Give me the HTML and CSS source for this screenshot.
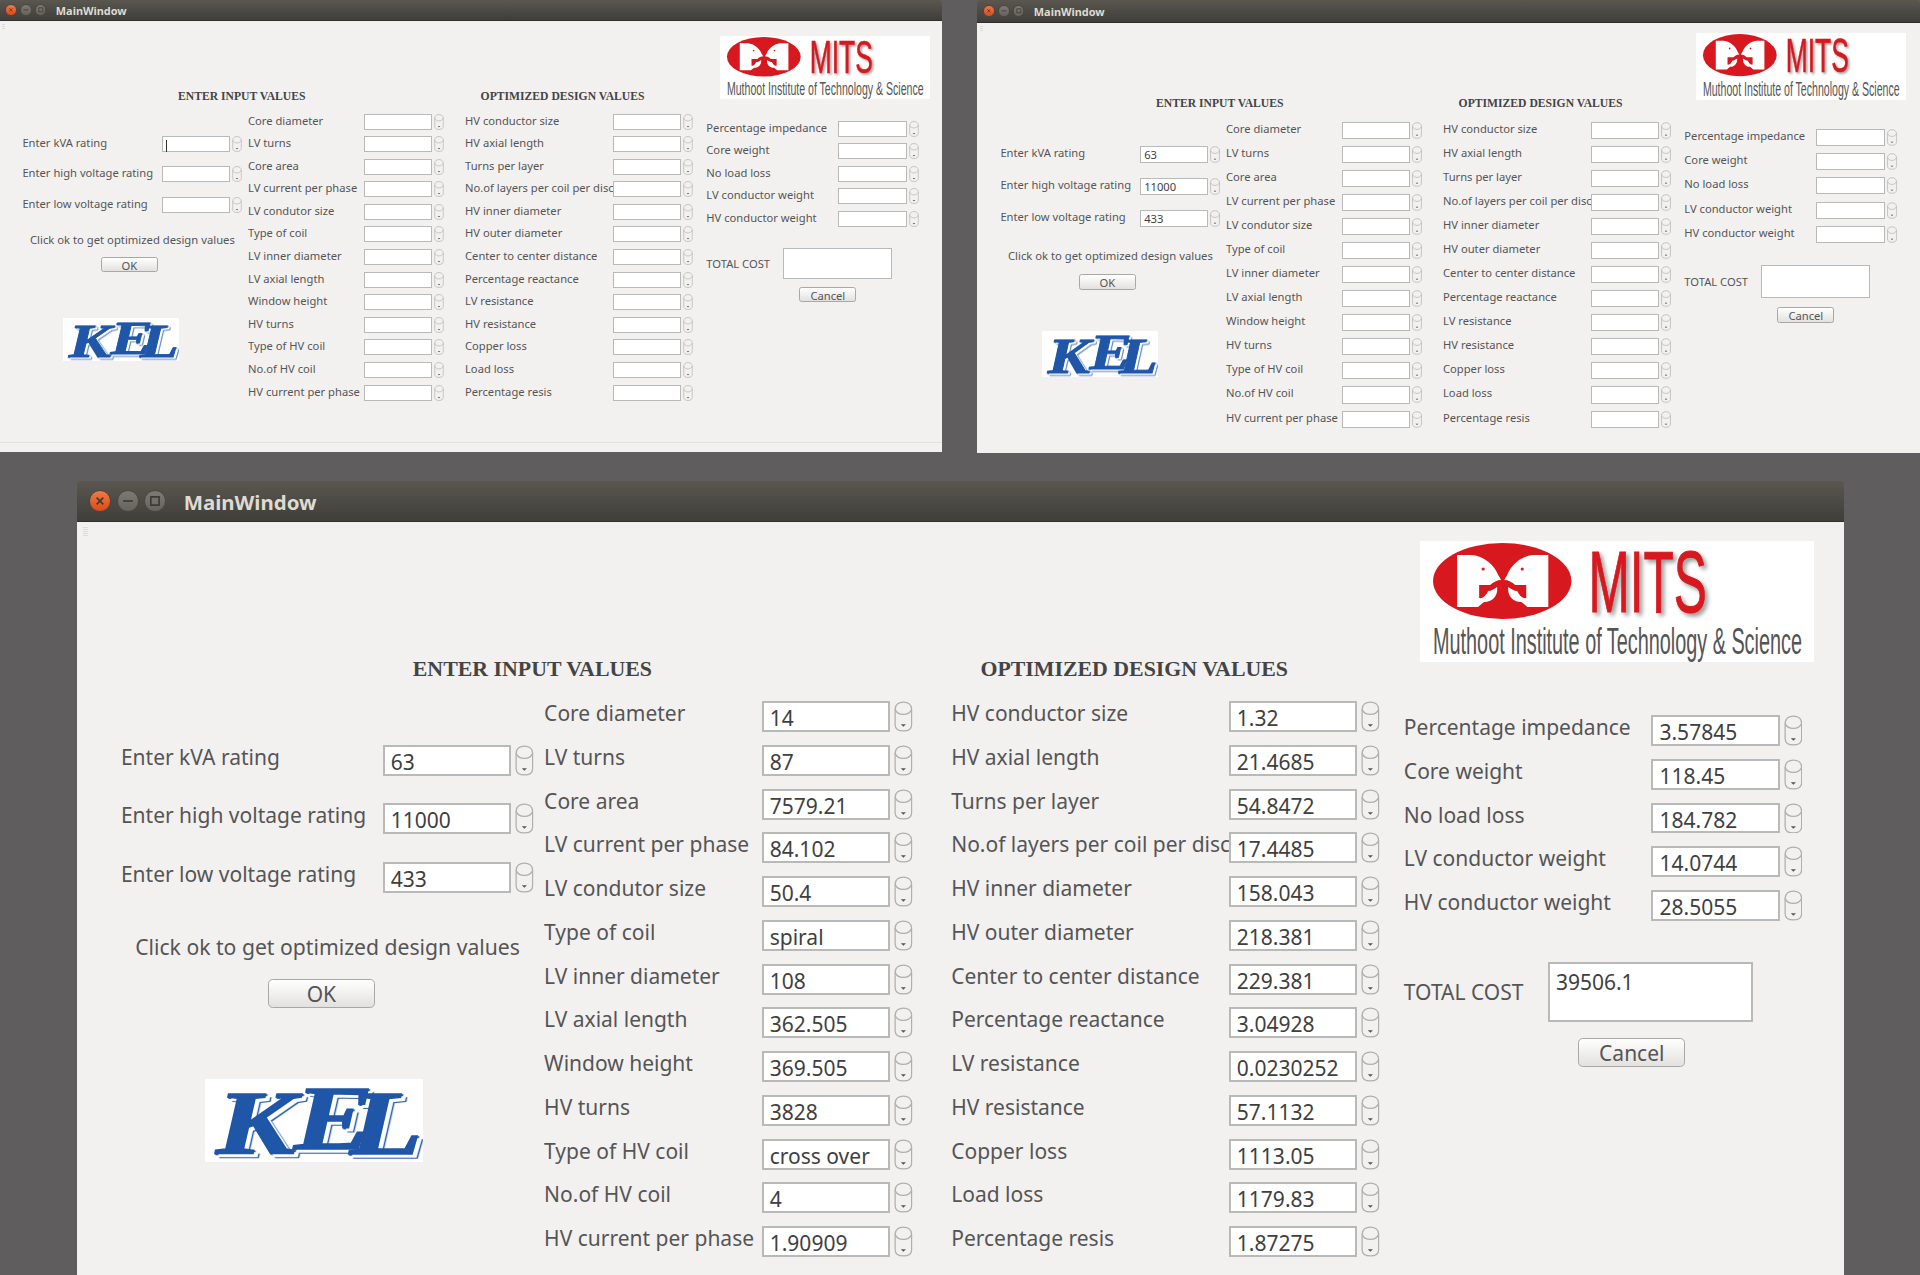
FILE: index.html
```html
<!DOCTYPE html>
<html lang="en">
<head>
    <meta charset="UTF-8">
    <title>MainWindow</title>
    <link rel="stylesheet" href="styles.css">
</head>
<body>

<svg class="defs" width="0" height="0" aria-hidden="true">
    <symbol id="spin" viewBox="0 0 18 30">
        <path class="spin-line" d="M1 8C1 3 5 1 9 1s8 2 8 7v15c0 4-3 6-8 6s-8-2-8-6z"/>
        <path class="spin-line" d="M1 8c1 3 4 5 8 5s7-2 8-5"/>
        <path class="spin-arrow" d="M6.5 22.5h5L9 25z"/>
    </symbol>
    <symbol id="w-close" viewBox="0 0 12 12"><path class="w-mark" d="M4 4l4 4M8 4l-4 4"/></symbol>
    <symbol id="w-min" viewBox="0 0 12 12"><path class="w-mark" d="M3 6h6"/></symbol>
    <symbol id="w-max" viewBox="0 0 12 12"><path class="w-mark" d="M3.5 3.5h5v5h-5z"/></symbol>
    <symbol id="emblem" viewBox="0 0 165 80">
        <ellipse cx="82" cy="40" rx="69" ry="38" fill="#d7191f"/>
        <path fill="#fff" d="M37 14H52C64 15 74 24 78 34L81 39C77 39 73 41 70 44H59V57C63 58 66 54 68 50C71 50 74 48 77 46C78 55 72 61 64 61C61 63 59 65 58 66H37Z"/>
        <path fill="#fff" transform="matrix(-1 0 0 1 165 0)" d="M37 14H52C64 15 74 24 78 34L81 39C77 39 73 41 70 44H59V57C63 58 66 54 68 50C71 50 74 48 77 46C78 55 72 61 64 61C61 63 59 65 58 66H37Z"/>
        <circle cx="63" cy="28" r="1.6" fill="#d7191f"/>
        <circle cx="102" cy="28" r="1.6" fill="#d7191f"/>
    </symbol>
</svg>

<!-- empty form, caret in the first box -->
<div class="window win-a">
    <div class="titlebar">
        <span class="wbtn wbtn-close"><svg><use href="#w-close"/></svg></span><span class="wbtn"><svg><use href="#w-min"/></svg></span><span class="wbtn"><svg><use href="#w-max"/></svg></span>
        <span class="title">MainWindow</span>
    </div>
    <div class="win-body">
        <div class="grip"></div>
        <div class="form">
            <h2 class="heading heading-input">ENTER INPUT VALUES</h2>
            <h2 class="heading heading-output">OPTIMIZED DESIGN VALUES</h2>
            <svg class="logo-mits" viewBox="0 0 393 121" preserveAspectRatio="none">
                <use href="#emblem" width="165" height="80"/>
                <text class="mits-name" x="168" y="71" textLength="118" lengthAdjust="spacingAndGlyphs">MITS</text>
                <text class="mits-sub" x="13" y="113" textLength="368" lengthAdjust="spacingAndGlyphs">Muthoot Institute of Technology &amp; Science</text>
            </svg>

            <div class="col col-a">
                <div class="field"><span class="label">Enter kVA rating</span><span class="box"><i class="caret"></i></span><svg class="spin"><use href="#spin"/></svg></div>
                <div class="field"><span class="label">Enter high voltage rating</span><span class="box"></span><svg class="spin"><use href="#spin"/></svg></div>
                <div class="field"><span class="label">Enter low voltage rating</span><span class="box"></span><svg class="spin"><use href="#spin"/></svg></div>
                <p class="hint">Click ok to get optimized design values</p>
                <button class="btn btn-ok">OK</button>
                <svg class="logo-kel" viewBox="0 0 219 85" preserveAspectRatio="none">
                    <text class="kel" transform="scale(1.3 1)" x="8.5 69 112" y="77 71 77">KEL</text>
                </svg>
            </div>

            <div class="col col-b">
                <div class="field"><span class="label">Core diameter</span><span class="box"></span><svg class="spin"><use href="#spin"/></svg></div>
                <div class="field"><span class="label">LV turns</span><span class="box"></span><svg class="spin"><use href="#spin"/></svg></div>
                <div class="field"><span class="label">Core area</span><span class="box"></span><svg class="spin"><use href="#spin"/></svg></div>
                <div class="field"><span class="label">LV current per phase</span><span class="box"></span><svg class="spin"><use href="#spin"/></svg></div>
                <div class="field"><span class="label">LV condutor size</span><span class="box"></span><svg class="spin"><use href="#spin"/></svg></div>
                <div class="field"><span class="label">Type of coil</span><span class="box"></span><svg class="spin"><use href="#spin"/></svg></div>
                <div class="field"><span class="label">LV inner diameter</span><span class="box"></span><svg class="spin"><use href="#spin"/></svg></div>
                <div class="field"><span class="label">LV axial length</span><span class="box"></span><svg class="spin"><use href="#spin"/></svg></div>
                <div class="field"><span class="label">Window height</span><span class="box"></span><svg class="spin"><use href="#spin"/></svg></div>
                <div class="field"><span class="label">HV turns</span><span class="box"></span><svg class="spin"><use href="#spin"/></svg></div>
                <div class="field"><span class="label">Type of HV coil</span><span class="box"></span><svg class="spin"><use href="#spin"/></svg></div>
                <div class="field"><span class="label">No.of HV coil</span><span class="box"></span><svg class="spin"><use href="#spin"/></svg></div>
                <div class="field"><span class="label">HV current per phase</span><span class="box"></span><svg class="spin"><use href="#spin"/></svg></div>
            </div>

            <div class="col col-c">
                <div class="field"><span class="label">HV conductor size</span><span class="box"></span><svg class="spin"><use href="#spin"/></svg></div>
                <div class="field"><span class="label">HV axial length</span><span class="box"></span><svg class="spin"><use href="#spin"/></svg></div>
                <div class="field"><span class="label">Turns per layer</span><span class="box"></span><svg class="spin"><use href="#spin"/></svg></div>
                <div class="field"><span class="label">No.of layers per coil per disc</span><span class="box"></span><svg class="spin"><use href="#spin"/></svg></div>
                <div class="field"><span class="label">HV inner diameter</span><span class="box"></span><svg class="spin"><use href="#spin"/></svg></div>
                <div class="field"><span class="label">HV outer diameter</span><span class="box"></span><svg class="spin"><use href="#spin"/></svg></div>
                <div class="field"><span class="label">Center to center distance</span><span class="box"></span><svg class="spin"><use href="#spin"/></svg></div>
                <div class="field"><span class="label">Percentage reactance</span><span class="box"></span><svg class="spin"><use href="#spin"/></svg></div>
                <div class="field"><span class="label">LV resistance</span><span class="box"></span><svg class="spin"><use href="#spin"/></svg></div>
                <div class="field"><span class="label">HV resistance</span><span class="box"></span><svg class="spin"><use href="#spin"/></svg></div>
                <div class="field"><span class="label">Copper loss</span><span class="box"></span><svg class="spin"><use href="#spin"/></svg></div>
                <div class="field"><span class="label">Load loss</span><span class="box"></span><svg class="spin"><use href="#spin"/></svg></div>
                <div class="field"><span class="label">Percentage resis</span><span class="box"></span><svg class="spin"><use href="#spin"/></svg></div>
            </div>

            <div class="col col-d">
                <div class="field"><span class="label">Percentage impedance</span><span class="box"></span><svg class="spin"><use href="#spin"/></svg></div>
                <div class="field"><span class="label">Core weight</span><span class="box"></span><svg class="spin"><use href="#spin"/></svg></div>
                <div class="field"><span class="label">No load loss</span><span class="box"></span><svg class="spin"><use href="#spin"/></svg></div>
                <div class="field"><span class="label">LV conductor weight</span><span class="box"></span><svg class="spin"><use href="#spin"/></svg></div>
                <div class="field"><span class="label">HV conductor weight</span><span class="box"></span><svg class="spin"><use href="#spin"/></svg></div>
                <div class="total"><span class="total-label">TOTAL COST</span><span class="total-box"></span></div>
                <button class="btn btn-cancel">Cancel</button>
            </div>
        </div>
        <div class="statusbar"></div>
    </div>
</div>

<!-- ratings typed in -->
<div class="window win-b">
    <div class="titlebar">
        <span class="wbtn wbtn-close"><svg><use href="#w-close"/></svg></span><span class="wbtn"><svg><use href="#w-min"/></svg></span><span class="wbtn"><svg><use href="#w-max"/></svg></span>
        <span class="title">MainWindow</span>
    </div>
    <div class="win-body">
        <div class="grip"></div>
        <div class="form">
            <h2 class="heading heading-input">ENTER INPUT VALUES</h2>
            <h2 class="heading heading-output">OPTIMIZED DESIGN VALUES</h2>
            <svg class="logo-mits" viewBox="0 0 393 121" preserveAspectRatio="none">
                <use href="#emblem" width="165" height="80"/>
                <text class="mits-name" x="168" y="71" textLength="118" lengthAdjust="spacingAndGlyphs">MITS</text>
                <text class="mits-sub" x="13" y="113" textLength="368" lengthAdjust="spacingAndGlyphs">Muthoot Institute of Technology &amp; Science</text>
            </svg>

            <div class="col col-a">
                <div class="field"><span class="label">Enter kVA rating</span><span class="box">63</span><svg class="spin"><use href="#spin"/></svg></div>
                <div class="field"><span class="label">Enter high voltage rating</span><span class="box">11000</span><svg class="spin"><use href="#spin"/></svg></div>
                <div class="field"><span class="label">Enter low voltage rating</span><span class="box">433</span><svg class="spin"><use href="#spin"/></svg></div>
                <p class="hint">Click ok to get optimized design values</p>
                <button class="btn btn-ok">OK</button>
                <svg class="logo-kel" viewBox="0 0 219 85" preserveAspectRatio="none">
                    <text class="kel" transform="scale(1.3 1)" x="8.5 69 112" y="77 71 77">KEL</text>
                </svg>
            </div>

            <div class="col col-b">
                <div class="field"><span class="label">Core diameter</span><span class="box"></span><svg class="spin"><use href="#spin"/></svg></div>
                <div class="field"><span class="label">LV turns</span><span class="box"></span><svg class="spin"><use href="#spin"/></svg></div>
                <div class="field"><span class="label">Core area</span><span class="box"></span><svg class="spin"><use href="#spin"/></svg></div>
                <div class="field"><span class="label">LV current per phase</span><span class="box"></span><svg class="spin"><use href="#spin"/></svg></div>
                <div class="field"><span class="label">LV condutor size</span><span class="box"></span><svg class="spin"><use href="#spin"/></svg></div>
                <div class="field"><span class="label">Type of coil</span><span class="box"></span><svg class="spin"><use href="#spin"/></svg></div>
                <div class="field"><span class="label">LV inner diameter</span><span class="box"></span><svg class="spin"><use href="#spin"/></svg></div>
                <div class="field"><span class="label">LV axial length</span><span class="box"></span><svg class="spin"><use href="#spin"/></svg></div>
                <div class="field"><span class="label">Window height</span><span class="box"></span><svg class="spin"><use href="#spin"/></svg></div>
                <div class="field"><span class="label">HV turns</span><span class="box"></span><svg class="spin"><use href="#spin"/></svg></div>
                <div class="field"><span class="label">Type of HV coil</span><span class="box"></span><svg class="spin"><use href="#spin"/></svg></div>
                <div class="field"><span class="label">No.of HV coil</span><span class="box"></span><svg class="spin"><use href="#spin"/></svg></div>
                <div class="field"><span class="label">HV current per phase</span><span class="box"></span><svg class="spin"><use href="#spin"/></svg></div>
            </div>

            <div class="col col-c">
                <div class="field"><span class="label">HV conductor size</span><span class="box"></span><svg class="spin"><use href="#spin"/></svg></div>
                <div class="field"><span class="label">HV axial length</span><span class="box"></span><svg class="spin"><use href="#spin"/></svg></div>
                <div class="field"><span class="label">Turns per layer</span><span class="box"></span><svg class="spin"><use href="#spin"/></svg></div>
                <div class="field"><span class="label">No.of layers per coil per disc</span><span class="box"></span><svg class="spin"><use href="#spin"/></svg></div>
                <div class="field"><span class="label">HV inner diameter</span><span class="box"></span><svg class="spin"><use href="#spin"/></svg></div>
                <div class="field"><span class="label">HV outer diameter</span><span class="box"></span><svg class="spin"><use href="#spin"/></svg></div>
                <div class="field"><span class="label">Center to center distance</span><span class="box"></span><svg class="spin"><use href="#spin"/></svg></div>
                <div class="field"><span class="label">Percentage reactance</span><span class="box"></span><svg class="spin"><use href="#spin"/></svg></div>
                <div class="field"><span class="label">LV resistance</span><span class="box"></span><svg class="spin"><use href="#spin"/></svg></div>
                <div class="field"><span class="label">HV resistance</span><span class="box"></span><svg class="spin"><use href="#spin"/></svg></div>
                <div class="field"><span class="label">Copper loss</span><span class="box"></span><svg class="spin"><use href="#spin"/></svg></div>
                <div class="field"><span class="label">Load loss</span><span class="box"></span><svg class="spin"><use href="#spin"/></svg></div>
                <div class="field"><span class="label">Percentage resis</span><span class="box"></span><svg class="spin"><use href="#spin"/></svg></div>
            </div>

            <div class="col col-d">
                <div class="field"><span class="label">Percentage impedance</span><span class="box"></span><svg class="spin"><use href="#spin"/></svg></div>
                <div class="field"><span class="label">Core weight</span><span class="box"></span><svg class="spin"><use href="#spin"/></svg></div>
                <div class="field"><span class="label">No load loss</span><span class="box"></span><svg class="spin"><use href="#spin"/></svg></div>
                <div class="field"><span class="label">LV conductor weight</span><span class="box"></span><svg class="spin"><use href="#spin"/></svg></div>
                <div class="field"><span class="label">HV conductor weight</span><span class="box"></span><svg class="spin"><use href="#spin"/></svg></div>
                <div class="total"><span class="total-label">TOTAL COST</span><span class="total-box"></span></div>
                <button class="btn btn-cancel">Cancel</button>
            </div>
        </div>
    </div>
</div>

<!-- results after pressing OK -->
<div class="window win-c">
    <div class="titlebar">
        <span class="wbtn wbtn-close"><svg><use href="#w-close"/></svg></span><span class="wbtn"><svg><use href="#w-min"/></svg></span><span class="wbtn"><svg><use href="#w-max"/></svg></span>
        <span class="title">MainWindow</span>
    </div>
    <div class="win-body">
        <div class="grip"></div>
        <div class="form">
            <h2 class="heading heading-input">ENTER INPUT VALUES</h2>
            <h2 class="heading heading-output">OPTIMIZED DESIGN VALUES</h2>
            <svg class="logo-mits" viewBox="0 0 393 121" preserveAspectRatio="none">
                <use href="#emblem" width="165" height="80"/>
                <text class="mits-name" x="168" y="71" textLength="118" lengthAdjust="spacingAndGlyphs">MITS</text>
                <text class="mits-sub" x="13" y="113" textLength="368" lengthAdjust="spacingAndGlyphs">Muthoot Institute of Technology &amp; Science</text>
            </svg>

            <div class="col col-a">
                <div class="field"><span class="label">Enter kVA rating</span><span class="box">63</span><svg class="spin"><use href="#spin"/></svg></div>
                <div class="field"><span class="label">Enter high voltage rating</span><span class="box">11000</span><svg class="spin"><use href="#spin"/></svg></div>
                <div class="field"><span class="label">Enter low voltage rating</span><span class="box">433</span><svg class="spin"><use href="#spin"/></svg></div>
                <p class="hint">Click ok to get optimized design values</p>
                <button class="btn btn-ok">OK</button>
                <svg class="logo-kel" viewBox="0 0 219 85" preserveAspectRatio="none">
                    <text class="kel" transform="scale(1.3 1)" x="8.5 69 112" y="77 71 77">KEL</text>
                </svg>
            </div>

            <div class="col col-b">
                <div class="field"><span class="label">Core diameter</span><span class="box">14</span><svg class="spin"><use href="#spin"/></svg></div>
                <div class="field"><span class="label">LV turns</span><span class="box">87</span><svg class="spin"><use href="#spin"/></svg></div>
                <div class="field"><span class="label">Core area</span><span class="box">7579.21</span><svg class="spin"><use href="#spin"/></svg></div>
                <div class="field"><span class="label">LV current per phase</span><span class="box">84.102</span><svg class="spin"><use href="#spin"/></svg></div>
                <div class="field"><span class="label">LV condutor size</span><span class="box">50.4</span><svg class="spin"><use href="#spin"/></svg></div>
                <div class="field"><span class="label">Type of coil</span><span class="box">spiral</span><svg class="spin"><use href="#spin"/></svg></div>
                <div class="field"><span class="label">LV inner diameter</span><span class="box">108</span><svg class="spin"><use href="#spin"/></svg></div>
                <div class="field"><span class="label">LV axial length</span><span class="box">362.505</span><svg class="spin"><use href="#spin"/></svg></div>
                <div class="field"><span class="label">Window height</span><span class="box">369.505</span><svg class="spin"><use href="#spin"/></svg></div>
                <div class="field"><span class="label">HV turns</span><span class="box">3828</span><svg class="spin"><use href="#spin"/></svg></div>
                <div class="field"><span class="label">Type of HV coil</span><span class="box">cross over</span><svg class="spin"><use href="#spin"/></svg></div>
                <div class="field"><span class="label">No.of HV coil</span><span class="box">4</span><svg class="spin"><use href="#spin"/></svg></div>
                <div class="field"><span class="label">HV current per phase</span><span class="box">1.90909</span><svg class="spin"><use href="#spin"/></svg></div>
            </div>

            <div class="col col-c">
                <div class="field"><span class="label">HV conductor size</span><span class="box">1.32</span><svg class="spin"><use href="#spin"/></svg></div>
                <div class="field"><span class="label">HV axial length</span><span class="box">21.4685</span><svg class="spin"><use href="#spin"/></svg></div>
                <div class="field"><span class="label">Turns per layer</span><span class="box">54.8472</span><svg class="spin"><use href="#spin"/></svg></div>
                <div class="field"><span class="label">No.of layers per coil per disc</span><span class="box">17.4485</span><svg class="spin"><use href="#spin"/></svg></div>
                <div class="field"><span class="label">HV inner diameter</span><span class="box">158.043</span><svg class="spin"><use href="#spin"/></svg></div>
                <div class="field"><span class="label">HV outer diameter</span><span class="box">218.381</span><svg class="spin"><use href="#spin"/></svg></div>
                <div class="field"><span class="label">Center to center distance</span><span class="box">229.381</span><svg class="spin"><use href="#spin"/></svg></div>
                <div class="field"><span class="label">Percentage reactance</span><span class="box">3.04928</span><svg class="spin"><use href="#spin"/></svg></div>
                <div class="field"><span class="label">LV resistance</span><span class="box">0.0230252</span><svg class="spin"><use href="#spin"/></svg></div>
                <div class="field"><span class="label">HV resistance</span><span class="box">57.1132</span><svg class="spin"><use href="#spin"/></svg></div>
                <div class="field"><span class="label">Copper loss</span><span class="box">1113.05</span><svg class="spin"><use href="#spin"/></svg></div>
                <div class="field"><span class="label">Load loss</span><span class="box">1179.83</span><svg class="spin"><use href="#spin"/></svg></div>
                <div class="field"><span class="label">Percentage resis</span><span class="box">1.87275</span><svg class="spin"><use href="#spin"/></svg></div>
            </div>

            <div class="col col-d">
                <div class="field"><span class="label">Percentage impedance</span><span class="box">3.57845</span><svg class="spin"><use href="#spin"/></svg></div>
                <div class="field"><span class="label">Core weight</span><span class="box">118.45</span><svg class="spin"><use href="#spin"/></svg></div>
                <div class="field"><span class="label">No load loss</span><span class="box">184.782</span><svg class="spin"><use href="#spin"/></svg></div>
                <div class="field"><span class="label">LV conductor weight</span><span class="box">14.0744</span><svg class="spin"><use href="#spin"/></svg></div>
                <div class="field"><span class="label">HV conductor weight</span><span class="box">28.5055</span><svg class="spin"><use href="#spin"/></svg></div>
                <div class="total"><span class="total-label">TOTAL COST</span><span class="total-box">39506.1</span></div>
                <button class="btn btn-cancel">Cancel</button>
            </div>
        </div>
    </div>
</div>

</body>
</html>
```

FILE: styles.css
```css
* {
    box-sizing: border-box;
}
body {
    margin: 0;
    height: 1275px;
    overflow: hidden;
    position: relative;
    background: #5f5d5d;
    font-family: 'Noto Sans', sans-serif;
}
.defs {
    position: absolute;
}

/* each window is the same form at another scale: --sx, --sy */
.window {
    position: absolute;
    display: flex;
    flex-direction: column;
    font-size: calc(var(--sx) * 11.2px);
    color: #555;
}
.win-a {
    --sx: 1;
    --sy: 1;
    --bar: 21px;
    --logo-top: 15px;
    --logo-left: 14px;
    --logo-h: 63px;
    --kel-gap: 46px;
    --kel-left: 41px;
    left: -1px;
    top: 0;
    width: 943px;
    height: 452px;
}
.win-b {
    --sx: 1;
    --sy: 1.066;
    --bar: 23px;
    --logo-top: 10px;
    --logo-left: 12px;
    --logo-h: 67px;
    --kel-gap: 41px;
    --kel-left: 42px;
    left: 977px;
    top: 0;
    width: 943px;
    height: 453px;
}
.win-c {
    --sx: 1.876;
    --sy: 1.936;
    --bar: 41px;
    --logo-top: 19px;
    --logo-left: 16px;
    --logo-h: 121px;
    --kel-gap: 71px;
    --kel-left: 84px;
    left: 77px;
    top: 481px;
    width: 1767px;
    height: 794px;
}

.titlebar {
    height: var(--bar);
    flex: none;
    display: flex;
    align-items: center;
    gap: calc(var(--sx) * 3px);
    padding-left: calc(var(--sx) * 6.4px);
    background: linear-gradient(#5a5750, #3f3e3a);
    border-bottom: 1px solid #2f2e2b;
    border-radius: 4px 4px 0 0;
}
.wbtn {
    width: calc(var(--sx) * 11.7px);
    height: calc(var(--sx) * 11.7px);
    border-radius: 50%;
    background: linear-gradient(#7d7a73, #67645e);
    border: 1px solid #4a4843;
}
.wbtn svg {
    display: block;
    width: 100%;
    height: 100%;
}
.wbtn-close {
    background: linear-gradient(#ef7a45, #df4a17);
}
.w-mark {
    fill: none;
    stroke: #3c3b37;
    stroke-width: 1;
}
.title {
    margin-left: calc(var(--sx) * 6.4px);
    padding-top: 1px;
    font-size: calc(var(--sx) * 10.9px);
    font-weight: bold;
    color: #dfdbd2;
}

.win-body {
    flex: 1;
    min-height: 0;
    position: relative;
    display: flex;
    flex-direction: column;
    background: #f2f1f0;
}
.grip {
    position: absolute;
    left: calc(var(--sx) * 3px);
    top: calc(var(--sy) * 2.5px);
    width: calc(var(--sx) * 3px);
    height: calc(var(--sy) * 5px);
    background: repeating-linear-gradient(#dcdbd9 0 1px, transparent 1px 2px);
}
.statusbar {
    flex: none;
    height: 10px;
    border-top: 1px solid #e3e2e0;
}

.form {
    flex: 1;
    display: grid;
    grid-template-columns: calc(var(--sx) * 249px) calc(var(--sx) * 217px) calc(var(--sx) * 241.3px) 1fr;
    grid-template-rows: calc(var(--sy) * 92.5px) auto;
    align-content: start;
}
.heading {
    margin: 0;
    padding-top: calc(var(--sy) * 70px);
    font-family: 'Liberation Serif', serif;
    font-size: calc(var(--sx) * 11.65px);
    line-height: calc(var(--sy) * 12px);
    font-weight: bold;
    color: #444;
    white-space: nowrap;
}
.heading-input {
    grid-column: 1 / 3;
    padding-left: calc(var(--sx) * 179px);
}
.heading-output {
    grid-column: 3;
    padding-left: calc(var(--sx) * 15.6px);
}
.logo-mits {
    grid-column: 4;
    grid-row: 1;
    margin-top: var(--logo-top);
    margin-left: var(--logo-left);
    width: calc(var(--sx) * 210px);
    height: var(--logo-h);
    background: #fff;
}

.col-a {
    padding-left: calc(var(--sx) * 23.4px);
    padding-top: calc(var(--sy) * 22.5px);
}
.col-d {
    padding-top: calc(var(--sy) * 7.2px);
}

.field {
    display: flex;
    height: calc(var(--sy) * 22.6px);
}
.col-a .field {
    height: calc(var(--sy) * 30.3px);
}
.label {
    flex: none;
    height: calc(var(--sy) * 16px);
    line-height: calc(var(--sy) * 13.3px);
    white-space: nowrap;
}
.col-a .label { width: calc(var(--sx) * 139.6px); }
.col-b .label { width: calc(var(--sx) * 116px); }
.col-c .label { width: calc(var(--sx) * 148px); }
.col-d .label { width: calc(var(--sx) * 132px); }

.box {
    flex: none;
    width: calc(var(--sx) * 68.4px);
    height: calc(var(--sy) * 16px);
    line-height: calc(var(--sy) * 15.6px);
    padding-left: calc(var(--sx) * 3.2px);
    background: #fff;
    border: 1px solid #b9b9b7;
    color: #3f3f3f;
    white-space: nowrap;
}
.win-c .box,
.win-c .total-box {
    border-width: 2px;
}
.caret {
    display: inline-block;
    width: 1px;
    height: 12px;
    background: #333;
    vertical-align: middle;
}
.spin {
    flex: none;
    width: calc(var(--sx) * 10px);
    height: calc(var(--sy) * 16px);
    margin-left: calc(var(--sx) * 2.1px);
}
.spin-line {
    fill: none;
    stroke: #b0afad;
    stroke-width: 1.2;
}
.spin-arrow {
    fill: #555;
}

.hint {
    margin: calc(var(--sy) * 6.4px) 0 0 calc(var(--sx) * 7.6px);
    font-size: calc(var(--sx) * 11.28px);
    line-height: calc(var(--sy) * 14px);
    white-space: nowrap;
}
.btn {
    display: block;
    width: calc(var(--sx) * 57px);
    height: calc(var(--sy) * 15px);
    padding: 0;
    font: inherit;
    color: #555;
    background: linear-gradient(#fff, #e2e1df);
    border: 1px solid #a9a8a6;
    border-radius: calc(var(--sx) * 2.5px);
}
.btn-ok {
    margin: calc(var(--sy) * 9.6px) 0 0 calc(var(--sx) * 78.4px);
}
.btn-cancel {
    margin: calc(var(--sy) * 8.4px) 0 0 calc(var(--sx) * 93px);
}
.logo-kel {
    display: block;
    margin: var(--kel-gap) 0 0 var(--kel-left);
    width: calc(var(--sx) * 116px);
    height: calc(var(--sy) * 43px);
    background: #fff;
}

.total {
    display: flex;
    align-items: center;
    margin-top: calc(var(--sy) * 14.4px);
}
.total-label {
    width: calc(var(--sx) * 77px);
    white-space: nowrap;
}
.total-box {
    width: calc(var(--sx) * 109px);
    height: calc(var(--sy) * 31px);
    padding: calc(var(--sy) * 2px) calc(var(--sx) * 3px);
    background: #fff;
    border: 1px solid #b9b9b7;
    color: #3f3f3f;
}

.mits-name {
    font-family: 'Liberation Sans Narrow', 'Liberation Sans', sans-serif;
    font-size: 88px;
    fill: #d7191f;
    stroke: #d7191f;
    stroke-width: 1;
    filter: drop-shadow(3px 3px 2px #999);
}
.mits-sub {
    font-family: 'Liberation Sans Narrow', 'Liberation Sans', sans-serif;
    font-size: 36px;
    fill: #555;
}
.kel {
    font-family: 'Liberation Serif', serif;
    font-weight: bold;
    font-style: italic;
    font-size: 92px;
    fill: #1f56a8;
    stroke: #1f56a8;
    stroke-width: 1.5;
    filter: drop-shadow(3px 3px 0 #fff) drop-shadow(1px 1px 0 #1f56a8);
}
```
